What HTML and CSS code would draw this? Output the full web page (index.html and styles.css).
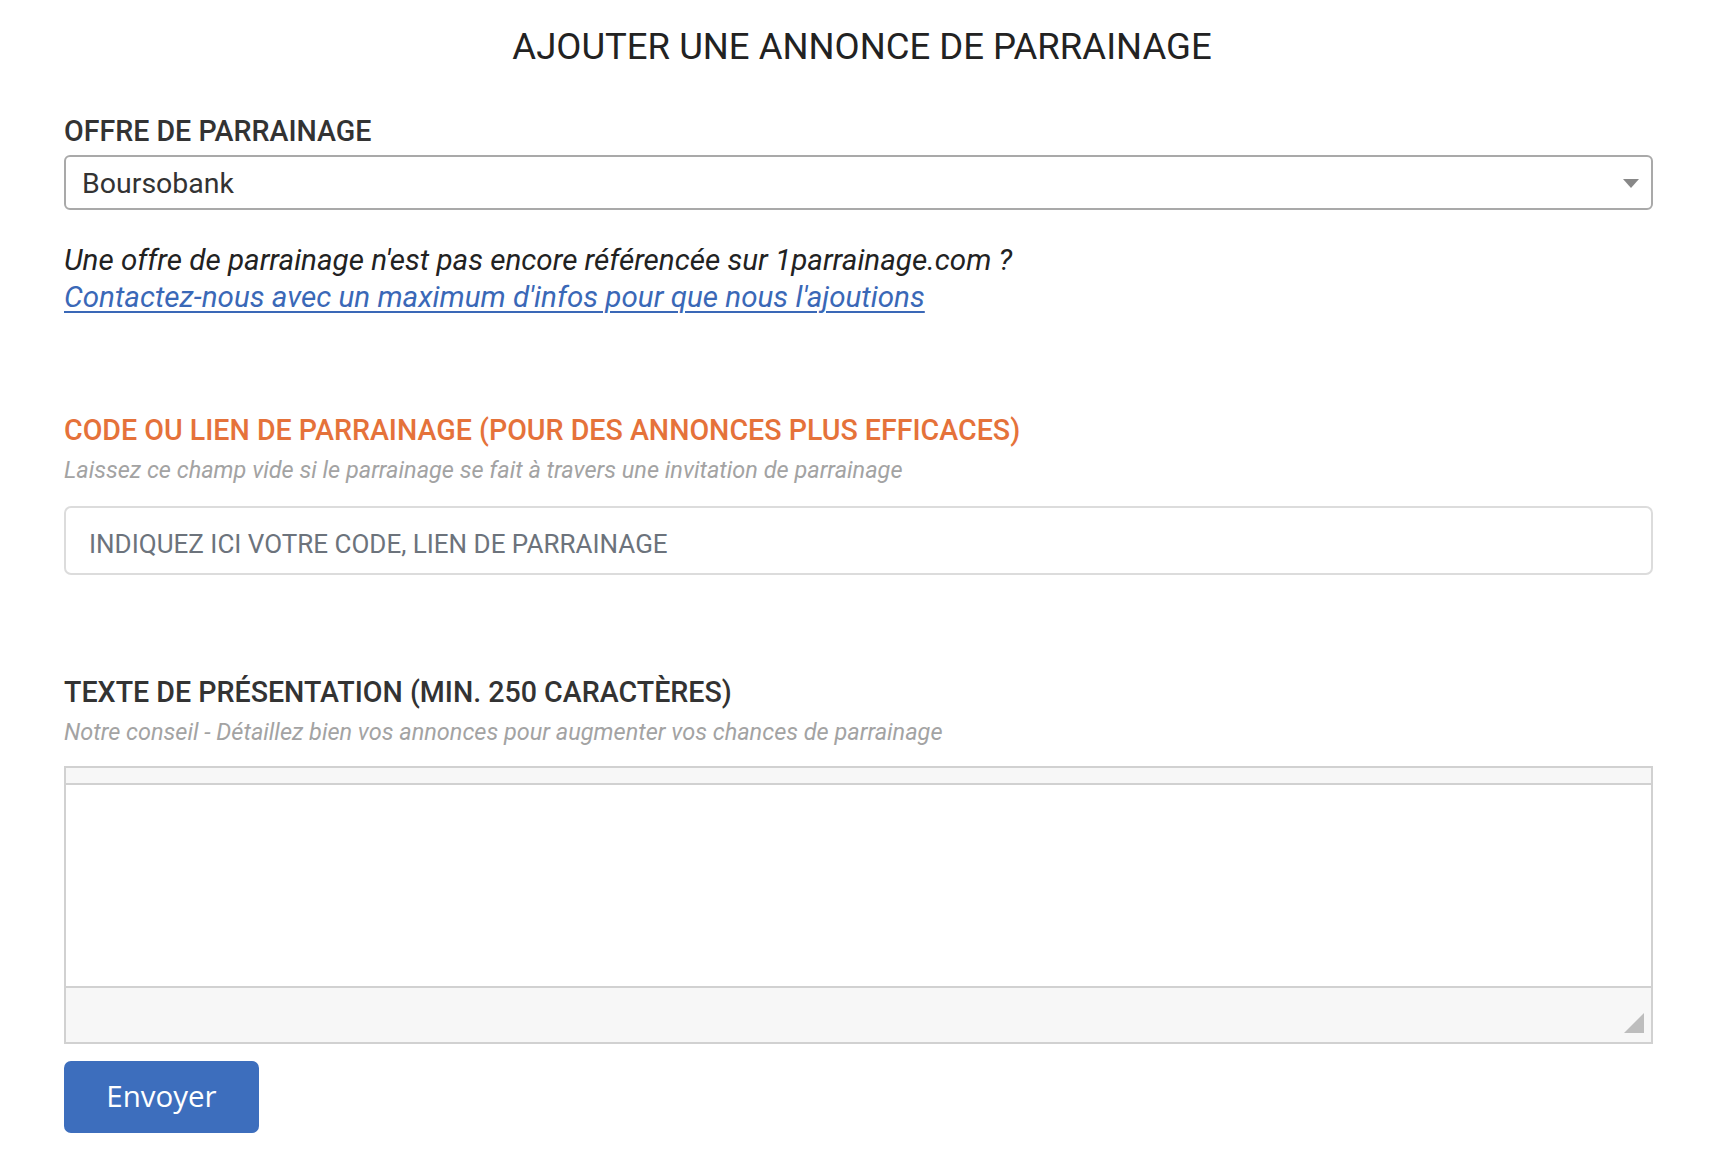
FILE: index.html
```html
<!DOCTYPE html>
<html lang="fr">
<head>
<meta charset="utf-8">
<title>Ajouter une annonce de parrainage</title>
<link rel="stylesheet" href="styles.css">
</head>
<body>
<main class="page">
  <h1 class="title">AJOUTER UNE ANNONCE DE PARRAINAGE</h1>
  <form class="form">
    <div class="field field-offer">
      <label class="label">OFFRE DE PARRAINAGE</label>
      <div class="select">
        <span class="select-value">Boursobank</span>
        <svg class="select-arrow" width="16" height="9" viewBox="0 0 16 9"><path d="M0 0H16L8 9Z" fill="#888"/></svg>
      </div>
    </div>
    <p class="note">
      <span class="note-text">Une offre de parrainage n'est pas encore référencée sur 1parrainage.com ?</span>
      <a class="note-link" href="#">Contactez-nous avec un maximum d'infos pour que nous l'ajoutions</a>
    </p>
    <div class="field field-code">
      <label class="label label-accent">CODE OU LIEN DE PARRAINAGE (POUR DES ANNONCES PLUS EFFICACES)</label>
      <p class="help">Laissez ce champ vide si le parrainage se fait à travers une invitation de parrainage</p>
      <input class="text-input" type="text" placeholder="INDIQUEZ ICI VOTRE CODE, LIEN DE PARRAINAGE">
    </div>
    <div class="field field-text">
      <label class="label">TEXTE DE PRÉSENTATION (MIN. 250 CARACTÈRES)</label>
      <p class="help">Notre conseil - Détaillez bien vos annonces pour augmenter vos chances de parrainage</p>
      <div class="editor">
        <div class="editor-toolbar"></div>
        <div class="editor-body"></div>
        <div class="editor-footer">
          <svg class="resize" width="20" height="20" viewBox="0 0 20 20"><path d="M20 0V20H0Z" fill="#bdbdbd"/></svg>
        </div>
      </div>
    </div>
    <button class="submit" type="button">Envoyer</button>
  </form>
</main>
</body>
</html>
```
FILE: styles.css
```css
* { box-sizing: border-box; }

html, body {
  margin: 0;
  padding: 0;
  background: #fff;
}

body {
  font-family: Roboto, "Liberation Sans", Arial, sans-serif;
  color: #333;
}

.page {
  padding-top: 27px;
  padding-bottom: 40px;
}

.title {
  margin: 0;
  font-size: 36.5px;
  line-height: 40px;
  font-weight: 400;
  color: #222;
  text-align: center;
}

.form {
  margin-left: 64px;
  width: 1589px;
  display: flex;
  flex-direction: column;
}

.field {
  display: flex;
  flex-direction: column;
}

.field-offer { margin-top: 49px; }
.field-code { margin-top: 99px; }
.field-text { margin-top: 102px; }

.label {
  font-size: 28.6px;
  line-height: 30px;
  font-weight: 500;
  color: #333;
}

.label-accent { color: #e5723a; }

.select {
  margin-top: 9px;
  height: 55px;
  border: 2px solid #a9a9a9;
  border-radius: 6px;
  padding: 10px 12px 0 16px;
  display: flex;
  align-items: flex-start;
  justify-content: space-between;
}

.select-value {
  font-size: 28.5px;
  line-height: 34px;
  color: #333;
}

.select-arrow {
  margin-top: 12px;
}

.note {
  margin: 32px 0 0;
  font-size: 29.6px;
  line-height: 37px;
  font-style: italic;
  color: #222;
}

.note-text, .note-link { display: block; }

.note-link {
  color: #3a68b7;
  text-decoration: underline;
  text-underline-offset: 4px;
  text-decoration-thickness: 2px;
}

.help {
  margin: 12px 0 0;
  font-size: 23.5px;
  line-height: 26px;
  font-style: italic;
  color: #a3a3a3;
}

.text-input {
  margin-top: 23px;
  height: 69px;
  border: 2px solid #dcdcdc;
  border-radius: 7px;
  padding: 6px 23px 0;
  font-family: Roboto, "Liberation Sans", Arial, sans-serif;
  font-size: 26px;
  color: #333;
  outline: none;
  background: #fff;
}

.text-input::placeholder {
  color: #6c737c;
  opacity: 1;
}

.editor {
  margin-top: 21px;
  height: 278px;
  border: 2px solid #d1d1d1;
  display: flex;
  flex-direction: column;
}

.editor-toolbar {
  height: 17px;
  background: #f7f7f7;
  border-bottom: 2px solid #d1d1d1;
}

.editor-body {
  flex: 1;
  background: #fff;
}

.editor-footer {
  height: 56px;
  background: #f7f7f7;
  border-top: 2px solid #d1d1d1;
  display: flex;
  justify-content: flex-end;
  align-items: flex-end;
  padding: 0 7px 9px 0;
}

.submit {
  margin-top: 17px;
  align-self: flex-start;
  width: 195px;
  height: 72px;
  border: none;
  border-radius: 7px;
  background: #3d6ebd;
  color: #fff;
  font-family: "Open Sans", "Noto Sans", sans-serif;
  font-size: 29.5px;
  font-weight: 500;
  padding: 0 0 4px;
  cursor: pointer;
}
```
